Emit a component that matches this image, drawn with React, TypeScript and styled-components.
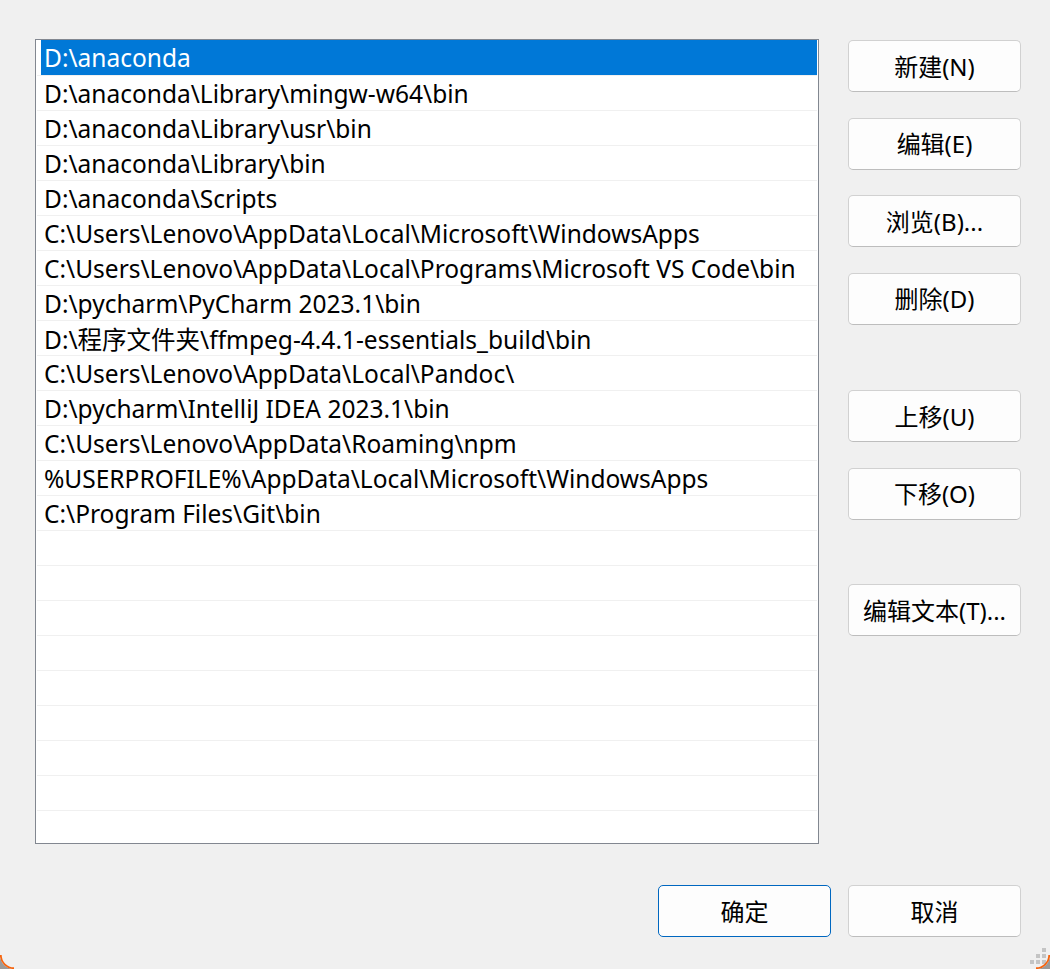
import React from "react";
import styled, { createGlobalStyle } from "styled-components";

const Global = createGlobalStyle`
  html, body { margin: 0; padding: 0; background: #f0f0f0; }
  * { box-sizing: border-box; }
`;

const FONT = `"Noto Sans", "Noto Sans CJK SC", sans-serif`;

const Window = styled.div`
  position: relative;
  width: 1050px;
  height: 969px;
  overflow: hidden;
  background: #f0f0f0;
  font-family: ${FONT};
  padding: 39px 29px 0 35px;
  display: flex;
  flex-direction: column;
`;

const Main = styled.div`
  display: flex;
  gap: 29px;
  align-items: flex-start;
`;

const ListBox = styled.div`
  width: 784px;
  height: 805px;
  background: #ffffff;
  border: 1px solid #828790;
  padding: 1px 1px 0 1px;
  overflow: hidden;
  display: flex;
  flex-direction: column;
`;

const Row = styled.div`
  flex: 0 0 35px;
  height: 35px;
  border-bottom: 1px solid #f0f0f0;
  padding: 0 0 0 4px;
  display: flex;
  align-items: stretch;
`;

const RowText = styled.div<{ $selected?: boolean }>`
  flex: 1;
  display: flex;
  align-items: center;
  padding: 0 0 0 3px;
  font-size: 24.5px;
  color: ${(p) => (p.$selected ? "#ffffff" : "#000000")};
  background: ${(p) => (p.$selected ? "#0078d7" : "transparent")};
  white-space: nowrap;
  margin-top: ${(p) => (p.$selected ? "-1px" : "0")};
`;

const Side = styled.div`
  display: flex;
  flex-direction: column;
  width: 173px;
  padding-top: 1px;
`;

const Button = styled.button<{ $primary?: boolean; $gap?: number }>`
  width: 173px;
  height: 52px;
  flex-shrink: 0;
  margin-top: ${(p) => p.$gap ?? 0}px;
  background: #fdfdfd;
  border: 1px solid ${(p) => (p.$primary ? "#0067c0" : "#d1d1d1")};
  border-bottom-color: ${(p) => (p.$primary ? "#0067c0" : "#bdbdbd")};
  border-radius: 5px;
  font-family: ${FONT};
  font-size: 24px;
  color: #000000;
  padding: 0 0 2px 0;
  display: flex;
  align-items: center;
  justify-content: center;
  white-space: nowrap;
  cursor: default;
`;

const Footer = styled.div`
  display: flex;
  justify-content: flex-end;
  gap: 17px;
  margin-top: 41px;
`;

const Corner = styled.svg<{ $side: "left" | "right" }>`
  position: absolute;
  bottom: 0;
  ${(p) => (p.$side === "left" ? "left: 0;" : "right: 0;")}
  width: 16px;
  height: 16px;
`;

const Grip = styled.svg`
  position: absolute;
  right: 3px;
  bottom: 4px;
  width: 17px;
  height: 17px;
`;

const items = [
  "D:\\anaconda",
  "D:\\anaconda\\Library\\mingw-w64\\bin",
  "D:\\anaconda\\Library\\usr\\bin",
  "D:\\anaconda\\Library\\bin",
  "D:\\anaconda\\Scripts",
  "C:\\Users\\Lenovo\\AppData\\Local\\Microsoft\\WindowsApps",
  "C:\\Users\\Lenovo\\AppData\\Local\\Programs\\Microsoft VS Code\\bin",
  "D:\\pycharm\\PyCharm 2023.1\\bin",
  "D:\\程序文件夹\\ffmpeg-4.4.1-essentials_build\\bin",
  "C:\\Users\\Lenovo\\AppData\\Local\\Pandoc\\",
  "D:\\pycharm\\IntelliJ IDEA 2023.1\\bin",
  "C:\\Users\\Lenovo\\AppData\\Roaming\\npm",
  "%USERPROFILE%\\AppData\\Local\\Microsoft\\WindowsApps",
  "C:\\Program Files\\Git\\bin",
];

const rows = [...items, ...Array(10).fill("")];

export default function App() {
  return (
    <>
      <Global />
      <Window>
        <Main>
          <ListBox>
            {rows.map((t, i) => (
              <Row key={i}>
                <RowText $selected={i === 0}>{t}</RowText>
              </Row>
            ))}
          </ListBox>
          <Side>
            <Button>新建(N)</Button>
            <Button $gap={25.5}>编辑(E)</Button>
            <Button $gap={25.5}>浏览(B)...</Button>
            <Button $gap={25.5}>删除(D)</Button>
            <Button $gap={65.5}>上移(U)</Button>
            <Button $gap={25.5}>下移(O)</Button>
            <Button $gap={64.5}>编辑文本(T)...</Button>
          </Side>
        </Main>
        <Footer>
          <Button $primary>确定</Button>
          <Button>取消</Button>
        </Footer>
        <Grip viewBox="0 0 17 17">
          {[
            [12, 0],
            [6, 6],
            [12, 6],
            [0, 12],
            [6, 12],
            [12, 12],
          ].map(([x, y], i) => (
            <rect key={i} x={x} y={y} width="4" height="4" fill="#c4c4c4" />
          ))}
        </Grip>
        <Corner $side="left" viewBox="0 0 16 16">
          <path d="M0 2 A14 14 0 0 0 14 16 L0 16 Z" fill="#9a9a9a" />
          <path d="M0.8 2 A13.2 13.2 0 0 0 14 15.2" fill="none" stroke="#f7630c" strokeWidth="1.8" />
        </Corner>
        <Corner $side="right" viewBox="0 0 16 16">
          <path d="M16 2 A14 14 0 0 1 2 16 L16 16 Z" fill="#9a9a9a" />
          <path d="M15.2 2 A13.2 13.2 0 0 1 2 15.2" fill="none" stroke="#f7630c" strokeWidth="1.8" />
        </Corner>
      </Window>
    </>
  );
}
